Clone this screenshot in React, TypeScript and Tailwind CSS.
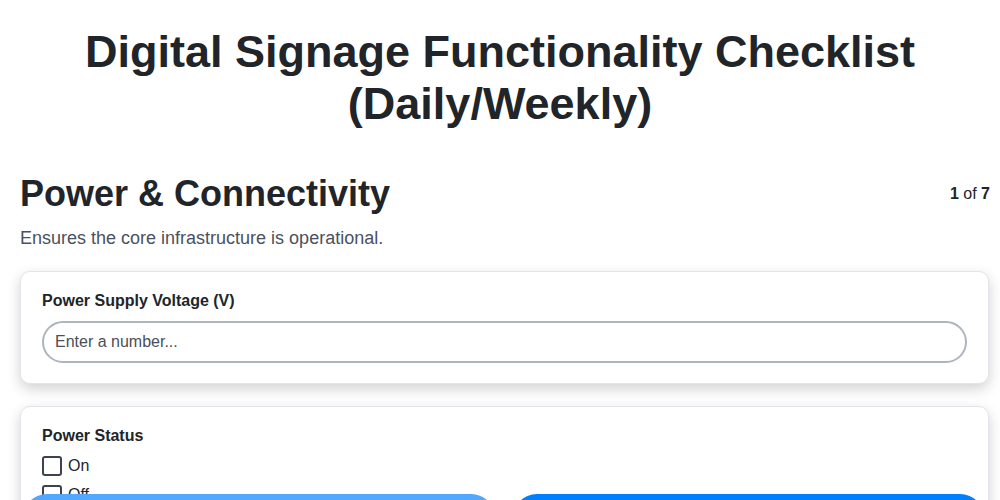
import React from 'react';

const font = { fontFamily: '"Liberation Sans", Arial, sans-serif' };

export default function App() {
  return (
    <div className="relative min-h-screen bg-white text-[#212529]" style={font}>
      <h1 className="px-5 pt-[26px] text-center text-[45px] font-bold leading-[52px]">
        Digital Signage Functionality Checklist (Daily/Weekly)
      </h1>

      <div className="pl-5 pr-[10px] pt-[42px]">
        <div className="flex items-center justify-between">
          <h2 className="text-[36px] font-bold leading-[44px]">Power &amp; Connectivity</h2>
          <span className="text-[16px]">
            <b>1</b> of <b>7</b>
          </span>
        </div>
        <p className="mt-[9px] text-[18px] text-[#4a5160]">Ensures the core infrastructure is operational.</p>

        <div className="mt-[19px] mr-[1px] rounded-[10px] border border-[#e3e5ea] bg-white px-[21px] pt-[19px] pb-[20px] shadow-[0_5px_14px_rgba(0,0,0,0.18)]">
          <label className="block text-[16px] font-bold leading-[20px]">Power Supply Voltage (V)</label>
          <input
            type="text"
            placeholder="Enter a number..."
            className="mt-[10px] h-[42px] w-full rounded-full border-2 border-[#adb5bd] px-[11px] text-[16px] text-[#495057] placeholder:text-[#495057] outline-none"
          />
        </div>

        <div className="mt-[22px] mr-[1px] rounded-[10px] border border-[#e3e5ea] bg-white px-[21px] pt-[19px] pb-[20px] shadow-[0_5px_14px_rgba(0,0,0,0.18)]">
          <p className="text-[16px] font-bold leading-[20px]">Power Status</p>
          <div className="mt-[10px] flex flex-col gap-[9px]">
            {['On', 'Off'].map((o) => (
              <label key={o} className="flex items-center gap-[6px] text-[16px] leading-[20px]">
                <span className="h-[20px] w-[20px] rounded-[3px] border-2 border-[#3d4250]" />
                {o}
              </label>
            ))}
          </div>
        </div>
      </div>

      <div className="fixed left-0 top-[494px] flex w-full gap-4 pl-[22px] pr-[15px]">
        <button aria-label="Previous" className="h-[50px] flex-1 rounded-full bg-[#52a8ff]" />
        <button aria-label="Next" className="h-[50px] flex-1 rounded-full bg-[#0080ff]" />
      </div>
    </div>
  );
}
